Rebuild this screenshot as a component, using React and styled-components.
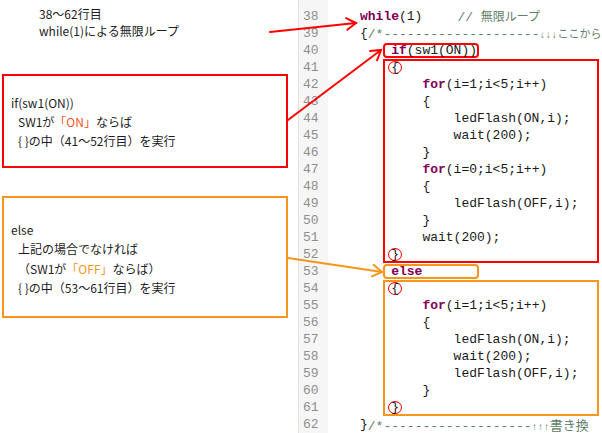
import React from 'react'
import styled, { createGlobalStyle } from 'styled-components'

const RED = '#ff0000'
const ORANGE = '#f7961c'

const GlobalStyle = createGlobalStyle`
  html, body {
    margin: 0;
    padding: 0;
    background: #fff;
  }
  body {
    overflow: hidden;
  }
`

const Page = styled.div`
  position: relative;
  width: 602px;
  height: 433px;
  overflow: hidden;
  display: flex;
  background: #fff;
`

/* ---------- left side: notes ---------- */

const Notes = styled.div`
  width: 296px;
  flex-shrink: 0;
  padding-left: 2px;
  display: flex;
  flex-direction: column;
  font-family: "Noto Sans CJK JP", sans-serif;
  font-size: 12px;
  color: #1c1c24;
`

const Heading = styled.div`
  margin-left: 37px;
  padding-top: 5px;
  line-height: 17px;
`

const NoteBox = styled.div`
  box-sizing: border-box;
  width: 286px;
  height: ${p => p.$h}px;
  margin-top: ${p => p.$mt}px;
  padding: ${p => p.$pt}px 0 0 7px;
  border: 2px solid ${p => p.$color};
  line-height: ${p => p.$lh}px;
`

const NoteLine = styled.div`
  white-space: pre;
  padding-left: ${p => (p.$sub ? 7 : 0)}px;
`

const Hi = styled.span`
  color: ${p => p.$color};
`

/* ---------- right side: code ---------- */

const Editor = styled.div`
  flex: 1;
  display: flex;
  min-width: 0;
  font-family: "Liberation Mono", "Courier New", monospace;
  font-size: 13px;
`

const Gutter = styled.div`
  box-sizing: border-box;
  width: 30px;
  flex-shrink: 0;
  padding: 7.5px 0 0 4px;
  background: #f6f6f6;
  border-left: 1px solid #e2e2e2;
  color: #8e8e8e;
`

const Num = styled.div`
  height: 17px;
  line-height: 17px;
`

const Code = styled.div`
  flex: 1;
  min-width: 0;
  overflow: hidden;
  padding: 7.5px 0 0 32px;
  color: #1a1a1a;
`

const Line = styled.div`
  display: flex;
  align-items: center;
  height: 17px;
  white-space: pre;
  padding-left: calc(${p => p.$indent || 0}ch - ${p => p.$shift || 0}px);
`

const Block = styled.div`
  margin: 0 3px 0 23px;
  box-shadow: inset 0 0 0 2px ${p => p.$color};
`

const Tag = styled.span`
  box-sizing: border-box;
  display: inline-flex;
  align-items: center;
  width: 96px;
  height: 15px;
  margin-left: 23px;
  padding-left: calc(4ch - 25px);
  border: 2px solid ${p => p.$color};
  border-radius: 4px;
`

const Circle = styled.span`
  box-sizing: border-box;
  display: inline-flex;
  align-items: center;
  justify-content: center;
  width: 14px;
  height: 13px;
  margin-left: -3px;
  border: 1px solid ${RED};
  border-radius: 50%;
  line-height: 1;
`

const Kw = styled.span`
  color: #7f0055;
  font-weight: bold;
`

const Comment = styled.span`
  color: #5e806c;
  margin-left: ${p => p.$gap || 0}px;
`

const Jp = styled.span`
  font-family: "Noto Sans CJK JP", sans-serif;
  font-size: ${p => p.$size}px;
`

const Arrows = styled.span`
  font-size: 10px;
`

const Overlay = styled.svg`
  position: absolute;
  top: 0;
  left: 0;
  pointer-events: none;
`

const Arrow = ({ x1, y1, x2, y2, color }) => {
  const a = Math.atan2(y2 - y1, x2 - x1)
  const len = 11
  const spread = 0.56
  const p1 = [x2 - len * Math.cos(a - spread), y2 - len * Math.sin(a - spread)]
  const p2 = [x2 - len * Math.cos(a + spread), y2 - len * Math.sin(a + spread)]
  return (
    <g stroke={color} strokeWidth="2" fill="none" strokeLinecap="round">
      <line x1={x1} y1={y1} x2={x2} y2={y2} />
      <polyline points={`${p1[0]},${p1[1]} ${x2},${y2} ${p2[0]},${p2[1]}`} />
    </g>
  )
}

const dashes = n => '-'.repeat(n)

const App = () => {
  const nums = Array.from({ length: 25 }, (_, i) => 38 + i)

  return (
    <Page>
      <GlobalStyle />
      <Notes>
        <Heading>
          <div>38〜62行目</div>
          <div>while(1)による無限ループ</div>
        </Heading>

        <NoteBox $color={RED} $h={94} $mt={35} $pt={17} $lh={19}>
          <NoteLine>if(sw1(ON))</NoteLine>
          <NoteLine $sub>SW1が<Hi $color="#f4552a">「ON」</Hi>ならば</NoteLine>
          <NoteLine $sub>{'{ }'}の中（41〜52行目）を実行</NoteLine>
        </NoteBox>

        <NoteBox $color={ORANGE} $h={122} $mt={28} $pt={22} $lh={19.3}>
          <NoteLine>else</NoteLine>
          <NoteLine $sub>上記の場合でなければ</NoteLine>
          <NoteLine $sub>（SW1が<Hi $color={ORANGE}>「OFF」</Hi>ならば）</NoteLine>
          <NoteLine $sub>{'{ }'}の中（53〜61行目）を実行</NoteLine>
        </NoteBox>
      </Notes>

      <Editor>
        <Gutter>
          {nums.map(n => <Num key={n}>{n}</Num>)}
        </Gutter>
        <Code>
          <Line><Kw>while</Kw>(1)<Comment $gap={35}>// <Jp $size={12}>無限ループ</Jp></Comment></Line>
          <Line>{'{'}<Comment>/*{dashes(20)}<Arrows>↓↓↓</Arrows><Jp $size={11}>ここから</Jp></Comment></Line>
          <Line><Tag $color={RED}><Kw>if</Kw>(sw1(ON))</Tag></Line>
          <Block $color={RED}>
            <Line $indent={4} $shift={23}><Circle>{'{'}</Circle></Line>
            <Line $indent={8} $shift={23}><Kw>for</Kw>(i=1;i&lt;5;i++)</Line>
            <Line $indent={8} $shift={23}>{'{'}</Line>
            <Line $indent={12} $shift={23}>ledFlash(ON,i);</Line>
            <Line $indent={12} $shift={23}>wait(200);</Line>
            <Line $indent={8} $shift={23}>{'}'}</Line>
            <Line $indent={8} $shift={23}><Kw>for</Kw>(i=0;i&lt;5;i++)</Line>
            <Line $indent={8} $shift={23}>{'{'}</Line>
            <Line $indent={12} $shift={23}>ledFlash(OFF,i);</Line>
            <Line $indent={8} $shift={23}>{'}'}</Line>
            <Line $indent={8} $shift={23}>wait(200);</Line>
            <Line $indent={4} $shift={23}><Circle>{'}'}</Circle></Line>
          </Block>
          <Line><Tag $color={ORANGE}><Kw>else</Kw></Tag></Line>
          <Block $color={ORANGE}>
            <Line $indent={4} $shift={23}><Circle>{'{'}</Circle></Line>
            <Line $indent={8} $shift={23}><Kw>for</Kw>(i=1;i&lt;5;i++)</Line>
            <Line $indent={8} $shift={23}>{'{'}</Line>
            <Line $indent={12} $shift={23}>ledFlash(ON,i);</Line>
            <Line $indent={12} $shift={23}>wait(200);</Line>
            <Line $indent={12} $shift={23}>ledFlash(OFF,i);</Line>
            <Line $indent={8} $shift={23}>{'}'}</Line>
            <Line $indent={4} $shift={23}><Circle>{'}'}</Circle></Line>
          </Block>
          <Line>{'}'}<Comment>/*{dashes(19)}<Arrows>↑↑↑</Arrows><Jp $size={13}>書き換</Jp></Comment></Line>
        </Code>
      </Editor>

      <Overlay width="602" height="433" viewBox="0 0 602 433">
        <Arrow x1={270} y1={32} x2={356} y2={23} color={RED} />
        <Arrow x1={288} y1={120} x2={381} y2={50} color={RED} />
        <Arrow x1={288} y1={258} x2={382} y2={272} color={ORANGE} />
      </Overlay>
    </Page>
  )
}

export default App
